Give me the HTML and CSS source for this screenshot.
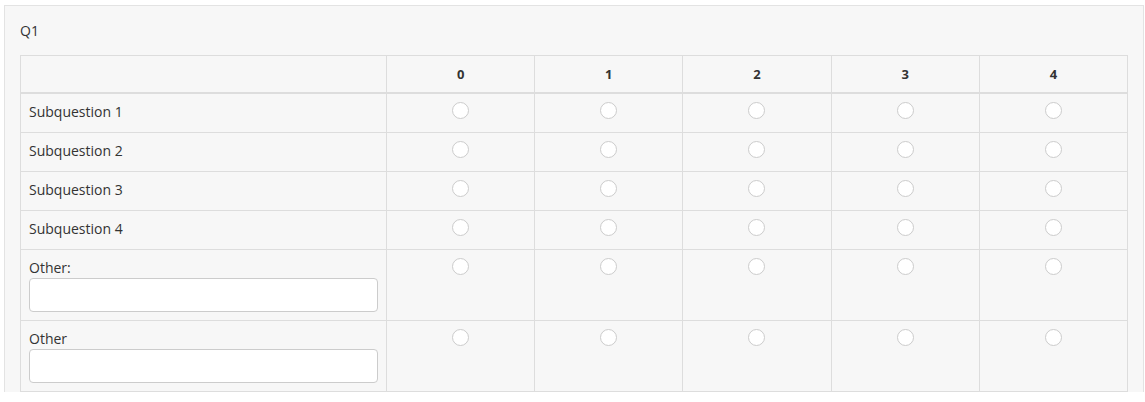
FILE: index.html
```html
<!DOCTYPE html>
<html lang="en">
<head>
<meta charset="utf-8">
<title>Q1</title>
<link rel="stylesheet" href="styles.css">
</head>
<body>
<div class="panel">
  <div class="question">Q1</div>
  <table class="matrix">
    <colgroup>
      <col class="col-label">
      <col><col><col><col><col>
    </colgroup>
    <thead>
      <tr>
        <th></th>
        <th>0</th><th>1</th><th>2</th><th>3</th><th>4</th>
      </tr>
    </thead>
    <tbody>
      <tr>
        <td class="label">Subquestion 1</td>
        <td class="opt"><span class="radio"></span></td><td class="opt"><span class="radio"></span></td><td class="opt"><span class="radio"></span></td><td class="opt"><span class="radio"></span></td><td class="opt"><span class="radio"></span></td>
      </tr>
      <tr>
        <td class="label">Subquestion 2</td>
        <td class="opt"><span class="radio"></span></td><td class="opt"><span class="radio"></span></td><td class="opt"><span class="radio"></span></td><td class="opt"><span class="radio"></span></td><td class="opt"><span class="radio"></span></td>
      </tr>
      <tr>
        <td class="label">Subquestion 3</td>
        <td class="opt"><span class="radio"></span></td><td class="opt"><span class="radio"></span></td><td class="opt"><span class="radio"></span></td><td class="opt"><span class="radio"></span></td><td class="opt"><span class="radio"></span></td>
      </tr>
      <tr>
        <td class="label">Subquestion 4</td>
        <td class="opt"><span class="radio"></span></td><td class="opt"><span class="radio"></span></td><td class="opt"><span class="radio"></span></td><td class="opt"><span class="radio"></span></td><td class="opt"><span class="radio"></span></td>
      </tr>
      <tr>
        <td class="label">Other:<input class="text-input" type="text"></td>
        <td class="opt"><span class="radio"></span></td><td class="opt"><span class="radio"></span></td><td class="opt"><span class="radio"></span></td><td class="opt"><span class="radio"></span></td><td class="opt"><span class="radio"></span></td>
      </tr>
      <tr>
        <td class="label">Other<input class="text-input" type="text"></td>
        <td class="opt"><span class="radio"></span></td><td class="opt"><span class="radio"></span></td><td class="opt"><span class="radio"></span></td><td class="opt"><span class="radio"></span></td><td class="opt"><span class="radio"></span></td>
      </tr>
    </tbody>
  </table>
</div>
</body>
</html>
```
FILE: styles.css
```css
html, body {
  margin: 0;
  padding: 0;
  background: #ffffff;
}

body {
  font-family: "Open Sans", "Liberation Sans", sans-serif;
  font-size: 14px;
  line-height: 20px;
  color: #333333;
}

.panel {
  margin: 5px 1px 0 4px;
  background: #f7f7f7;
  border: 1px solid #e3e3e3;
  border-bottom: none;
  padding: 15px 15px 0 15px;
}

.question {
  line-height: 20px;
  margin-bottom: 14px;
}

.matrix {
  width: 100%;
  border-collapse: collapse;
  table-layout: fixed;
  border: 1px solid #dddddd;
}

.matrix .col-label {
  width: 366px;
}

.matrix th,
.matrix td {
  border: 1px solid #dddddd;
  padding: 8px;
  vertical-align: top;
}

.matrix th {
  font-size: 13px;
  font-weight: bold;
  text-align: center;
  line-height: 20px;
  border-bottom: 2px solid #dddddd;
  color: #333333;
}

.matrix td.label {
  text-align: left;
  padding-bottom: 10px;
}

.matrix td.opt {
  text-align: center;
  height: 22px;
  padding-bottom: 8px;
}

.radio {
  display: inline-block;
  box-sizing: border-box;
  width: 17px;
  height: 17px;
  border: 1px solid #cccccc;
  border-radius: 50%;
  background: #ffffff;
  vertical-align: top;
}

.text-input {
  display: block;
  box-sizing: border-box;
  width: 100%;
  height: 34px;
  margin: 0 0 -2px 0;
  border: 1px solid #cccccc;
  border-radius: 4px;
  background: #ffffff;
  font: inherit;
  padding: 6px 12px;
}
```
